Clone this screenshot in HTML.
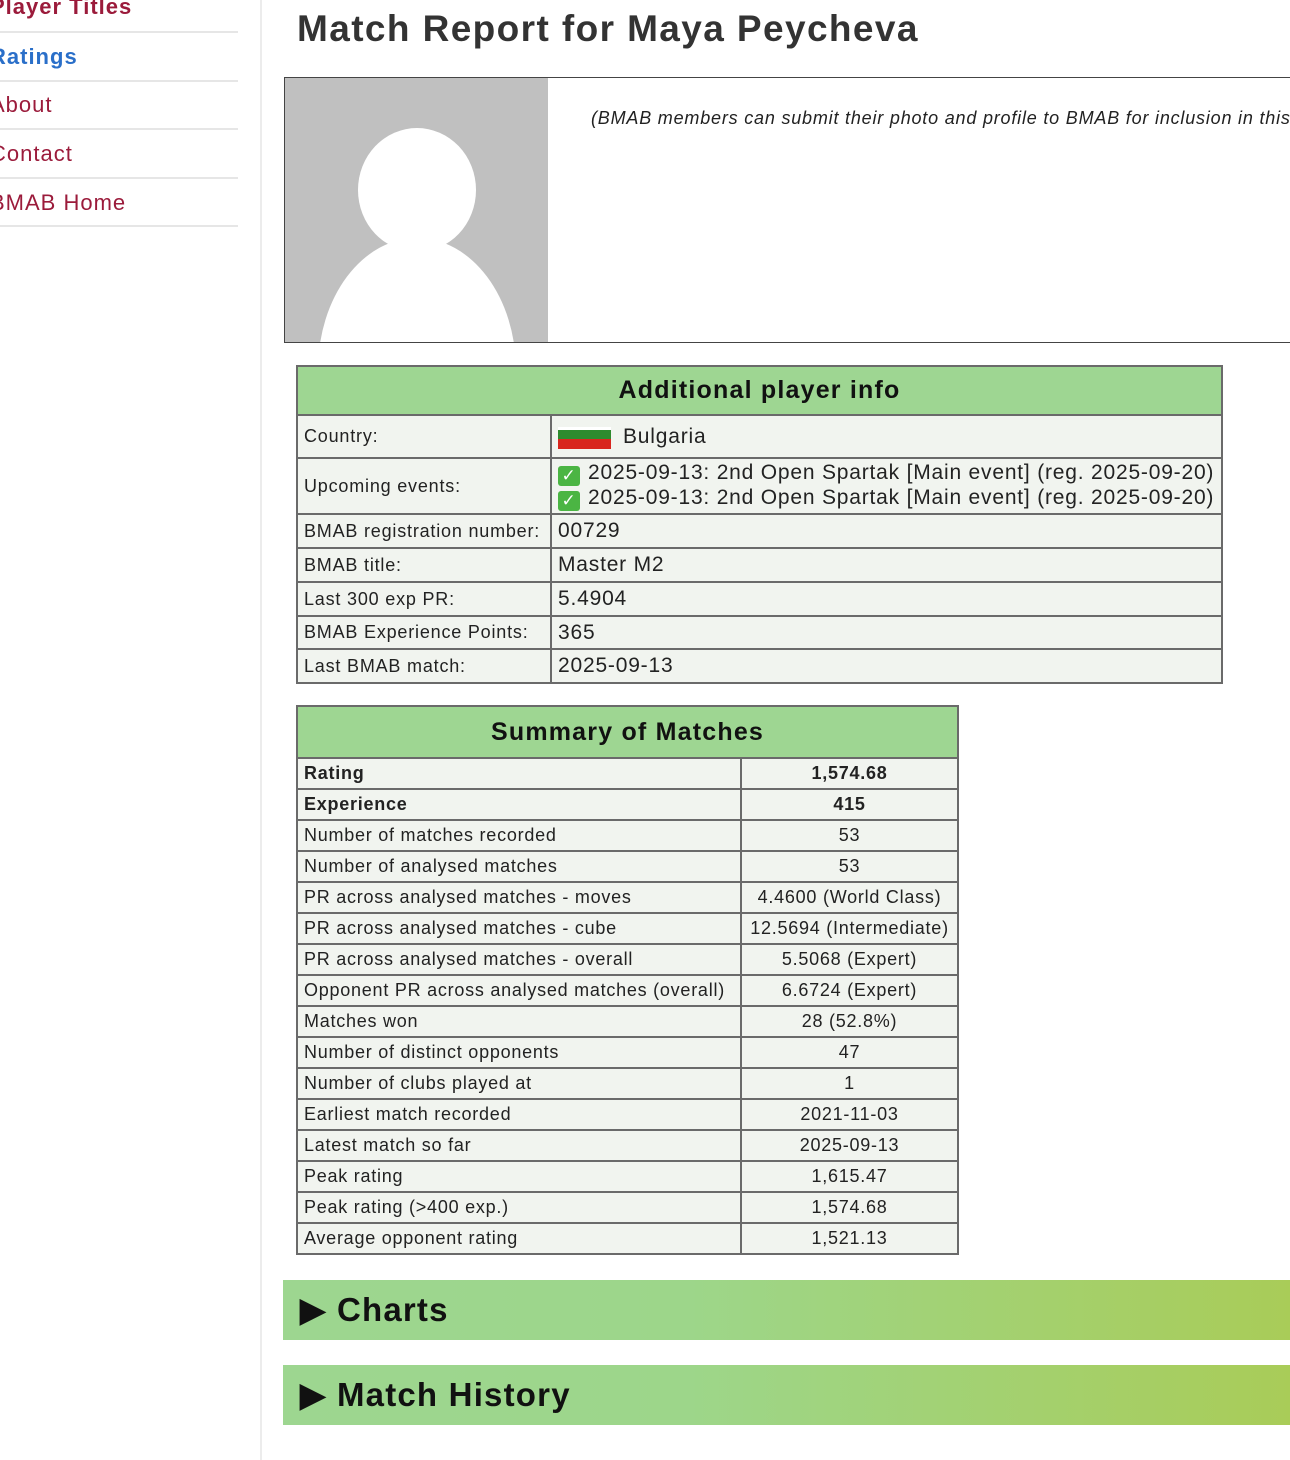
<!DOCTYPE html>
<html><head><meta charset="utf-8"><style>
body{margin:0;width:1290px;height:1460px;overflow:hidden;background:#fff;font-family:"Liberation Sans",sans-serif;position:relative;letter-spacing:0.8px}
.nav{position:absolute;left:-10px;font-size:22px;color:#9b1b3b;letter-spacing:1px}
.ln{position:absolute;left:0;width:238px;height:2px;background:#e6e6e6}
.vd{position:absolute;left:260px;top:0;width:2px;height:1460px;background:#ececec}
h1{position:absolute;left:297px;top:8px;margin:0;font-size:37px;color:#333;letter-spacing:1.4px}
.box{position:absolute;left:284px;top:77px;width:1020px;height:264px;border:1px solid #444}
.photo{position:absolute;left:0;top:0;width:263px;height:264px;background:#c0c0c0;overflow:hidden}
.cap{position:absolute;left:306px;top:30px;font-style:italic;font-size:18px;color:#222;white-space:nowrap}
table{position:absolute;border-collapse:collapse;background:#f1f4ef}
td,th{border:2px solid #6a6a6a;padding:0 6px;color:#222;white-space:nowrap}
th{background:#9ed692;font-size:25px;font-weight:bold;color:#111;letter-spacing:1.2px}
#t1{left:296px;top:365px;width:927px}
#t1 td{font-size:18px}
#t1 td.v{font-size:21px}
#t2{left:296px;top:705px;width:661px;font-size:18px;letter-spacing:0.75px;table-layout:fixed}
#t2 tr{height:31px}
#t2 td{overflow:hidden}
#t2 td:nth-child(2){text-align:center;padding:0 2px}
.bar{position:absolute;left:283px;width:1010px;height:60px;background:linear-gradient(90deg,#9dd690,#9dd68a 40%,#a9cc58);font-size:33px;font-weight:bold;color:#111;line-height:60px;padding-left:17px;box-sizing:border-box;letter-spacing:1.2px}
.chk{display:inline-block;width:22px;height:20px;background:#4bb543;border-radius:3px;color:#fff;font-size:17px;line-height:20px;text-align:center;vertical-align:-2px;margin-right:8px}
</style></head><body>
<div class="nav" style="top:-6px;font-weight:bold">Player Titles</div>
<div class="ln" style="top:31px"></div>
<div class="nav" style="top:44px;color:#2a6fc9;font-weight:bold">Ratings</div>
<div class="ln" style="top:80px"></div>
<div class="nav" style="top:92px">About</div>
<div class="ln" style="top:128px"></div>
<div class="nav" style="top:141px">Contact</div>
<div class="ln" style="top:177px"></div>
<div class="nav" style="top:190px">BMAB Home</div>
<div class="ln" style="top:225px"></div>
<div class="vd"></div>
<h1>Match Report for Maya Peycheva</h1>
<div class="box"><div class="photo">
<div style="position:absolute;left:73px;top:50px;width:118px;height:124px;border-radius:50%;background:#fff"></div>
<div style="position:absolute;left:33px;top:160px;width:198px;height:220px;border-radius:50% 50% 0 0/60% 60% 0 0;background:#fff"></div>
</div><div class="cap">(BMAB members can submit their photo and profile to BMAB for inclusion in this page)</div></div>
<table id="t1">
<tr><th colspan="2" style="height:47px">Additional player info</th></tr>
<tr style="height:43px"><td style="width:240px">Country:</td><td class="v"><span style="display:inline-block;width:53px;height:22px;background:linear-gradient(#fff 0 3px,#2e8b2e 3px 12px,#d8261e 12px);vertical-align:-6px;margin-right:12px"></span>Bulgaria</td></tr>
<tr style="height:56px"><td>Upcoming events:</td><td class="v" style="line-height:23px"><span class="chk">✓</span>2025-09-13: 2nd Open Spartak [Main event] (reg. 2025-09-20)<br><span class="chk">✓</span>2025-09-13: 2nd Open Spartak [Main event] (reg. 2025-09-20)</td></tr>
<tr style="height:34px"><td>BMAB registration number:</td><td class="v">00729</td></tr>
<tr style="height:34px"><td>BMAB title:</td><td class="v">Master M2</td></tr>
<tr style="height:34px"><td>Last 300 exp PR:</td><td class="v">5.4904</td></tr>
<tr style="height:33px"><td>BMAB Experience Points:</td><td class="v">365</td></tr>
<tr style="height:34px"><td>Last BMAB match:</td><td class="v">2025-09-13</td></tr>
</table>
<table id="t2">
<colgroup><col style="width:444px"><col style="width:217px"></colgroup>
<tr style="height:52px"><th colspan="2">Summary of Matches</th></tr>
<tr><td><b>Rating</b></td><td><b>1,574.68</b></td></tr>
<tr><td><b>Experience</b></td><td><b>415</b></td></tr>
<tr><td>Number of matches recorded</td><td>53</td></tr>
<tr><td>Number of analysed matches</td><td>53</td></tr>
<tr><td>PR across analysed matches - moves</td><td>4.4600 (World Class)</td></tr>
<tr><td>PR across analysed matches - cube</td><td>12.5694 (Intermediate)</td></tr>
<tr><td>PR across analysed matches - overall</td><td>5.5068 (Expert)</td></tr>
<tr><td>Opponent PR across analysed matches (overall)</td><td>6.6724 (Expert)</td></tr>
<tr><td>Matches won</td><td>28 (52.8%)</td></tr>
<tr><td>Number of distinct opponents</td><td>47</td></tr>
<tr><td>Number of clubs played at</td><td>1</td></tr>
<tr><td>Earliest match recorded</td><td>2021-11-03</td></tr>
<tr><td>Latest match so far</td><td>2025-09-13</td></tr>
<tr><td>Peak rating</td><td>1,615.47</td></tr>
<tr><td>Peak rating (&gt;400 exp.)</td><td>1,574.68</td></tr>
<tr><td>Average opponent rating</td><td>1,521.13</td></tr>
</table>
<div class="bar" style="top:1280px">▶ Charts</div>
<div class="bar" style="top:1365px">▶ Match History</div>
</body></html>
